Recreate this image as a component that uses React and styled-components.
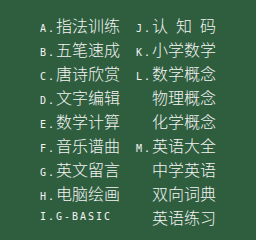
import styled, { createGlobalStyle } from 'styled-components';

const GlobalStyle = createGlobalStyle`
  html, body {
    margin: 0;
    padding: 0;
    background: #2e5e3e;
  }
`;

const Screen = styled.div`
  width: 256px;
  height: 240px;
  box-sizing: border-box;
  padding: 13px 0 0 40px;
  background: #2e5e3e;
  overflow: hidden;
`;

const Menu = styled.div`
  display: grid;
  grid-template-columns: 96px 96px;
  grid-template-rows: repeat(9, 24px);
  grid-auto-flow: column;
`;

const Item = styled.div`
  display: flex;
  align-items: baseline;
  height: 24px;
  line-height: 24px;
  white-space: nowrap;
  color: #f4f4f4;
`;

const Key = styled.span`
  width: 16px;
  flex: none;
  font-family: "DejaVu Sans Mono", "Liberation Mono", monospace;
  font-size: 10px;
  letter-spacing: 1.98px;
`;

const Label = styled.span`
  font-family: ${(p) =>
    p.$latin
      ? '"DejaVu Sans Mono", "Liberation Mono", monospace'
      : '"Noto Sans CJK SC", "Noto Sans", sans-serif'};
  font-size: ${(p) => (p.$latin ? '10px' : '16px')};
  font-weight: ${(p) => (p.$latin ? 400 : 300)};
  letter-spacing: ${(p) => (p.$latin ? '1.98px' : '0')};
`;

const items = [
  { key: 'A.', label: '指法训练' },
  { key: 'B.', label: '五笔速成' },
  { key: 'C.', label: '唐诗欣赏' },
  { key: 'D.', label: '文字编辑' },
  { key: 'E.', label: '数学计算' },
  { key: 'F.', label: '音乐谱曲' },
  { key: 'G.', label: '英文留言' },
  { key: 'H.', label: '电脑绘画' },
  { key: 'I.', label: 'G-BASIC', latin: true },
  { key: 'J.', label: '认\u2002知\u2002码' },
  { key: 'K.', label: '小学数学' },
  { key: 'L.', label: '数学概念' },
  { key: '', label: '物理概念' },
  { key: '', label: '化学概念' },
  { key: 'M.', label: '英语大全' },
  { key: '', label: '中学英语' },
  { key: '', label: '双向词典' },
  { key: '', label: '英语练习' },
];

export default function App() {
  return (
    <>
      <GlobalStyle />
      <Screen>
        <Menu>
          {items.map((item, i) => (
            <Item key={i}>
              <Key>{item.key}</Key>
              <Label $latin={item.latin}>{item.label}</Label>
            </Item>
          ))}
        </Menu>
      </Screen>
    </>
  );
}
